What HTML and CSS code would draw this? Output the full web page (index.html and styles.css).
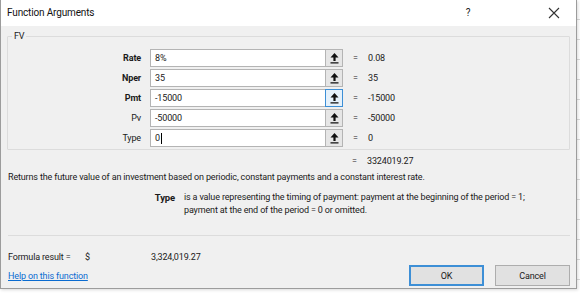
FILE: index.html
```html
<!DOCTYPE html>
<html lang="en">
<head>
    <meta charset="UTF-8">
    <title>Function Arguments</title>
    <link rel="stylesheet" href="styles.css">
</head>
<body>
    <div class="dialog">
        <div class="title-bar">
            <span class="title">Function Arguments</span>
            <span class="help-btn">?</span>
            <span class="close-btn">
                <svg width="12" height="12" viewBox="0 0 12 12"><path d="M1 1 L11 11 M11 1 L1 11" stroke="#333" stroke-width="1.1" fill="none"/></svg>
            </span>
        </div>
        <div class="body">
            <fieldset class="group">
                <legend>FV</legend>
                <div class="args">
                    <label class="req">Rate</label>
                    <div class="field"><span class="text">8%</span><span class="pick"><svg width="9" height="11" viewBox="0 0 9 11"><path d="M4.5 0 L8.5 4.5 L5.6 4.5 L5.6 8 L3.4 8 L3.4 4.5 L0.5 4.5 Z M0.5 9.2 H8.5 V10.6 H0.5 Z" fill="#111"/></svg></span></div>
                    <span class="eq">=</span>
                    <span class="val">0.08</span>

                    <label class="req">Nper</label>
                    <div class="field"><span class="text">35</span><span class="pick"><svg width="9" height="11" viewBox="0 0 9 11"><path d="M4.5 0 L8.5 4.5 L5.6 4.5 L5.6 8 L3.4 8 L3.4 4.5 L0.5 4.5 Z M0.5 9.2 H8.5 V10.6 H0.5 Z" fill="#111"/></svg></span></div>
                    <span class="eq">=</span>
                    <span class="val">35</span>

                    <label class="req">Pmt</label>
                    <div class="field"><span class="text">-15000</span><span class="pick active"><svg width="9" height="11" viewBox="0 0 9 11"><path d="M4.5 0 L8.5 4.5 L5.6 4.5 L5.6 8 L3.4 8 L3.4 4.5 L0.5 4.5 Z M0.5 9.2 H8.5 V10.6 H0.5 Z" fill="#111"/></svg></span></div>
                    <span class="eq">=</span>
                    <span class="val">-15000</span>

                    <label>Pv</label>
                    <div class="field"><span class="text">-50000</span><span class="pick"><svg width="9" height="11" viewBox="0 0 9 11"><path d="M4.5 0 L8.5 4.5 L5.6 4.5 L5.6 8 L3.4 8 L3.4 4.5 L0.5 4.5 Z M0.5 9.2 H8.5 V10.6 H0.5 Z" fill="#111"/></svg></span></div>
                    <span class="eq">=</span>
                    <span class="val">-50000</span>

                    <label>Type</label>
                    <div class="field"><span class="text">0<span class="caret"></span></span><span class="pick"><svg width="9" height="11" viewBox="0 0 9 11"><path d="M4.5 0 L8.5 4.5 L5.6 4.5 L5.6 8 L3.4 8 L3.4 4.5 L0.5 4.5 Z M0.5 9.2 H8.5 V10.6 H0.5 Z" fill="#111"/></svg></span></div>
                    <span class="eq">=</span>
                    <span class="val">0</span>
                </div>
            </fieldset>

            <div class="args result">
                <span></span>
                <span></span>
                <span class="eq">=</span>
                <span class="val">3324019.27</span>
            </div>

            <p class="summary">Returns the future value of an investment based on periodic, constant payments and a constant interest rate.</p>

            <div class="arg-help">
                <span class="arg-name">Type</span>
                <span class="arg-desc">is a value representing the timing of payment: payment at the beginning of the period = 1; payment at the end of the period = 0 or omitted.</span>
            </div>

            <div class="separator"></div>

            <div class="formula">
                <span class="formula-label">Formula result =</span>
                <span class="currency">$</span>
                <span class="formula-val">3,324,019.27</span>
            </div>

            <div class="footer">
                <a href="#" class="help-link">Help on this function</a>
                <div class="buttons">
                    <button class="btn default">OK</button>
                    <button class="btn">Cancel</button>
                </div>
            </div>
        </div>
    </div>
</body>
</html>
```

FILE: styles.css
```css
* {
    margin: 0;
    padding: 0;
    box-sizing: border-box;
}

body {
    width: 580px;
    height: 295px;
    overflow: hidden;
    font-family: Roboto, "Open Sans", sans-serif;
    font-size: 9px;
    line-height: 12px;
    letter-spacing: -0.15px;
    color: #1a1a1a;
    background-color: #fff;
    background-image: repeating-linear-gradient(to bottom, transparent 0, transparent 19px, #dadada 19px, #dadada 20px);
}

/* Dialog frame */
.dialog {
    width: 577px;
    height: 289px;
    background: #f0f0f0;
    border: 1px solid #9c9c9c;
    border-top: none;
    box-shadow: 1px 1px 3px rgba(0, 0, 0, 0.15);
}

.title-bar {
    height: 26px;
    background: #fff;
    display: flex;
    align-items: center;
    padding-left: 6px;
}

.title {
    flex: 1;
    font-size: 10px;
    color: #111;
}

.help-btn {
    width: 20px;
    text-align: center;
    font-size: 10px;
    margin-right: 66px;
}

.close-btn {
    width: 20px;
    display: flex;
    justify-content: center;
    margin-right: 12px;
}

.body {
    padding: 0 6px 0 6px;
}

/* Arguments group */
.group {
    margin-top: 5px;
    height: 119px;
    border: 1px solid #dcdcdc;
    border-radius: 1px;
    padding: 0;
}

.group legend {
    margin-left: 4px;
    padding: 0 2px;
    line-height: 10px;
}

.args {
    display: grid;
    grid-template-columns: 133px 193px 7px 1fr;
    grid-auto-rows: 18px;
    column-gap: 9px;
    row-gap: 2px;
    align-items: center;
    margin-top: 8px;
}

.args label {
    text-align: right;
}

.args label.req {
    font-weight: bold;
}

.field {
    display: flex;
    height: 18px;
    background: #fff;
    border: 1px solid #b4b4b4;
}

.field .text {
    flex: 1;
    padding-left: 4px;
    line-height: 16px;
    display: flex;
    align-items: center;
}

.caret {
    display: inline-block;
    width: 1px;
    height: 11px;
    background: #000;
    margin-left: 1px;
}

.pick {
    width: 18px;
    margin: -1px -1px -1px 0;
    background: #e6e6e6;
    border: 1px solid #b4b4b4;
    display: flex;
    align-items: center;
    justify-content: center;
}

.pick.active {
    border-color: #3d8fd6;
    background: #e5f1fb;
}

.eq {
    text-align: center;
}

/* Result row */
.result {
    margin-top: 4px;
    grid-auto-rows: 14px;
}

.summary {
    margin-top: 2px;
    line-height: 14px;
    padding-left: 1px;
}

.arg-help {
    display: flex;
    margin-top: 7px;
    line-height: 13px;
}

.arg-name {
    width: 177px;
    text-align: right;
    font-weight: bold;
    font-size: 9.5px;
    padding-right: 9px;
}

.arg-desc {
    width: 345px;
}

.separator {
    margin: 18px 0 0 1px;
    height: 1px;
    background: #dcdcdc;
}

.formula {
    display: flex;
    margin-top: 15px;
    padding-left: 1px;
}

.formula-label {
    width: 77px;
}

.currency {
    width: 66px;
}

.footer {
    display: flex;
    align-items: center;
    justify-content: space-between;
    margin-top: 2px;
    padding-left: 1px;
}

.help-link {
    color: #0a6bd0;
    text-decoration: underline;
}

.buttons {
    display: flex;
    gap: 11px;
}

.btn {
    width: 75px;
    height: 21px;
    font-family: inherit;
    font-size: 9px;
    letter-spacing: inherit;
    color: #1a1a1a;
    background: #e1e1e1;
    border: 1px solid #adadad;
}

.btn.default {
    border: 1px solid #3d8fd6;
    box-shadow: inset 0 0 0 1px #3d8fd6;
}
```
